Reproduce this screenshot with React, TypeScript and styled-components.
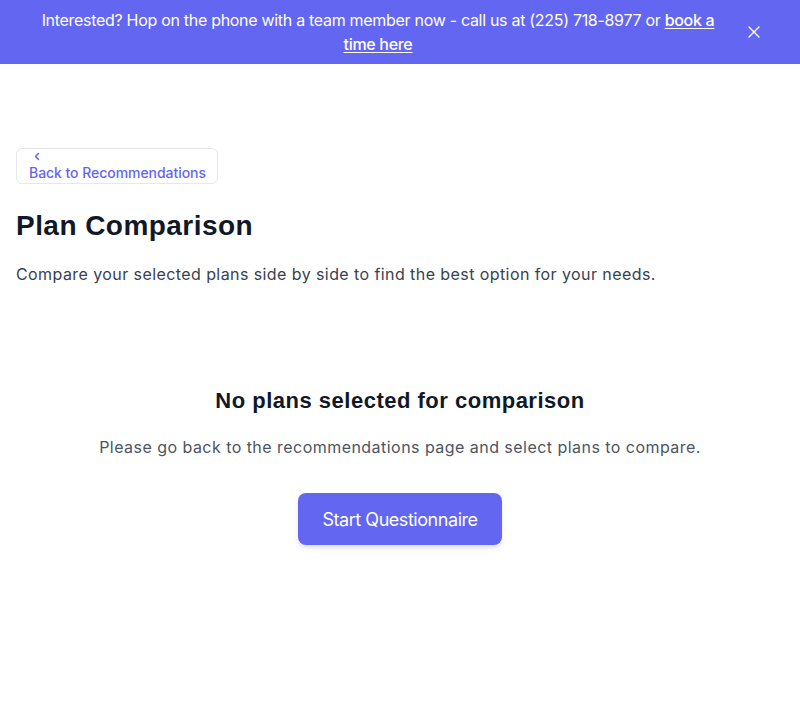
import React from 'react'
import styled, {createGlobalStyle} from 'styled-components'

const GlobalStyle = createGlobalStyle`
  html, body {
    margin: 0;
    padding: 0;
    background: #ffffff;
    font-family: Inter, "Noto Sans", sans-serif;
    -webkit-font-smoothing: antialiased;
  }
`

const App = () => {
    return (
        <>
            <GlobalStyle/>
            <Page>
                <Banner>
                    <BannerText>
                        Interested? Hop on the phone with a team member now - call us at (225) 718-8977 or{' '}
                        <BannerLink href="#">book a time here</BannerLink>
                    </BannerText>
                    <CloseButton aria-label="Close">
                        <svg width="12" height="12" viewBox="0 0 12 12" fill="none" stroke="currentColor"
                             strokeWidth="1.4" strokeLinecap="round">
                            <path d="M1 1 L11 11 M11 1 L1 11"/>
                        </svg>
                    </CloseButton>
                </Banner>
                <Main>
                    <BackButton>
                        <svg width="12" height="12" viewBox="0 0 12 12" fill="none" stroke="currentColor"
                             strokeWidth="1.5" strokeLinecap="round" strokeLinejoin="round">
                            <path d="M7.5 2.5 L4.5 5.5 L7.5 8.5"/>
                        </svg>
                        <BackLabel>Back to Recommendations</BackLabel>
                    </BackButton>
                    <Title>Plan Comparison</Title>
                    <Subtitle>Compare your selected plans side by side to find the best option for your needs.</Subtitle>
                    <Empty>
                        <EmptyTitle>No plans selected for comparison</EmptyTitle>
                        <EmptyText>Please go back to the recommendations page and select plans to compare.</EmptyText>
                        <PrimaryButton>Start Questionnaire</PrimaryButton>
                    </Empty>
                </Main>
            </Page>
        </>
    )
}
export default App

const Page = styled.div`
  min-height: 716px;
  background: #ffffff;
`

const Banner = styled.div`
  height: 64px;
  box-sizing: border-box;
  background: #6366f1;
  color: #ffffff;
  display: flex;
  align-items: center;
  gap: 24px;
  padding: 0 40px 0 32px;
`

const BannerText = styled.p`
  flex: 1;
  margin: 0;
  font-size: 16px;
  line-height: 24px;
  letter-spacing: -0.3px;
  text-align: center;
  font-weight: 400;
`

const BannerLink = styled.a`
  color: #ffffff;
  font-weight: 500;
  text-decoration: underline;
  text-underline-offset: 2px;
`

const CloseButton = styled.button`
  background: none;
  border: none;
  padding: 0;
  color: #ffffff;
  display: flex;
  cursor: pointer;
`

const Main = styled.main`
  padding: 84px 16px 0;
`

const BackButton = styled.button`
  display: flex;
  flex-direction: column;
  align-items: flex-start;
  box-sizing: border-box;
  height: 36px;
  padding: 2px 11px 0 12px;
  background: #ffffff;
  border: 1px solid #e5e7eb;
  border-radius: 6px;
  color: #6366f1;
  font-family: Inter, "Noto Sans", sans-serif;
  cursor: pointer;

  svg {
    margin: 0 0 0 2px;
  }
`

const BackLabel = styled.span`
  font-size: 14px;
  line-height: 20px;
  font-weight: 500;
  letter-spacing: -0.05px;
`

const Title = styled.h1`
  margin: 24px 0 0;
  font-family: "Liberation Sans", Arial, sans-serif;
  font-size: 28px;
  line-height: 36px;
  font-weight: 700;
  letter-spacing: 0.45px;
  color: #111827;
`

const Subtitle = styled.p`
  margin: 18px 0 0;
  font-size: 16px;
  line-height: 24px;
  letter-spacing: 0.42px;
  color: #374151;
`

const Empty = styled.section`
  display: flex;
  flex-direction: column;
  align-items: center;
  text-align: center;
  padding-top: 101px;
`

const EmptyTitle = styled.h2`
  margin: 0;
  font-family: "Liberation Sans", Arial, sans-serif;
  font-size: 22px;
  line-height: 28px;
  font-weight: 700;
  letter-spacing: 0.5px;
  color: #111827;
`

const EmptyText = styled.p`
  margin: 20px 0 0;
  font-size: 16px;
  line-height: 24px;
  letter-spacing: 0.46px;
  color: #4b5563;
`

const PrimaryButton = styled.button`
  margin-top: 34px;
  height: 52px;
  padding: 0 24px;
  background: #6366f1;
  color: #ffffff;
  border: none;
  border-radius: 8px;
  font-family: Inter, "Noto Sans", sans-serif;
  font-size: 18px;
  font-weight: 400;
  letter-spacing: -0.45px;
  box-shadow: 0 4px 6px -1px rgba(0, 0, 0, 0.1), 0 2px 4px -2px rgba(0, 0, 0, 0.1);
  cursor: pointer;
`
